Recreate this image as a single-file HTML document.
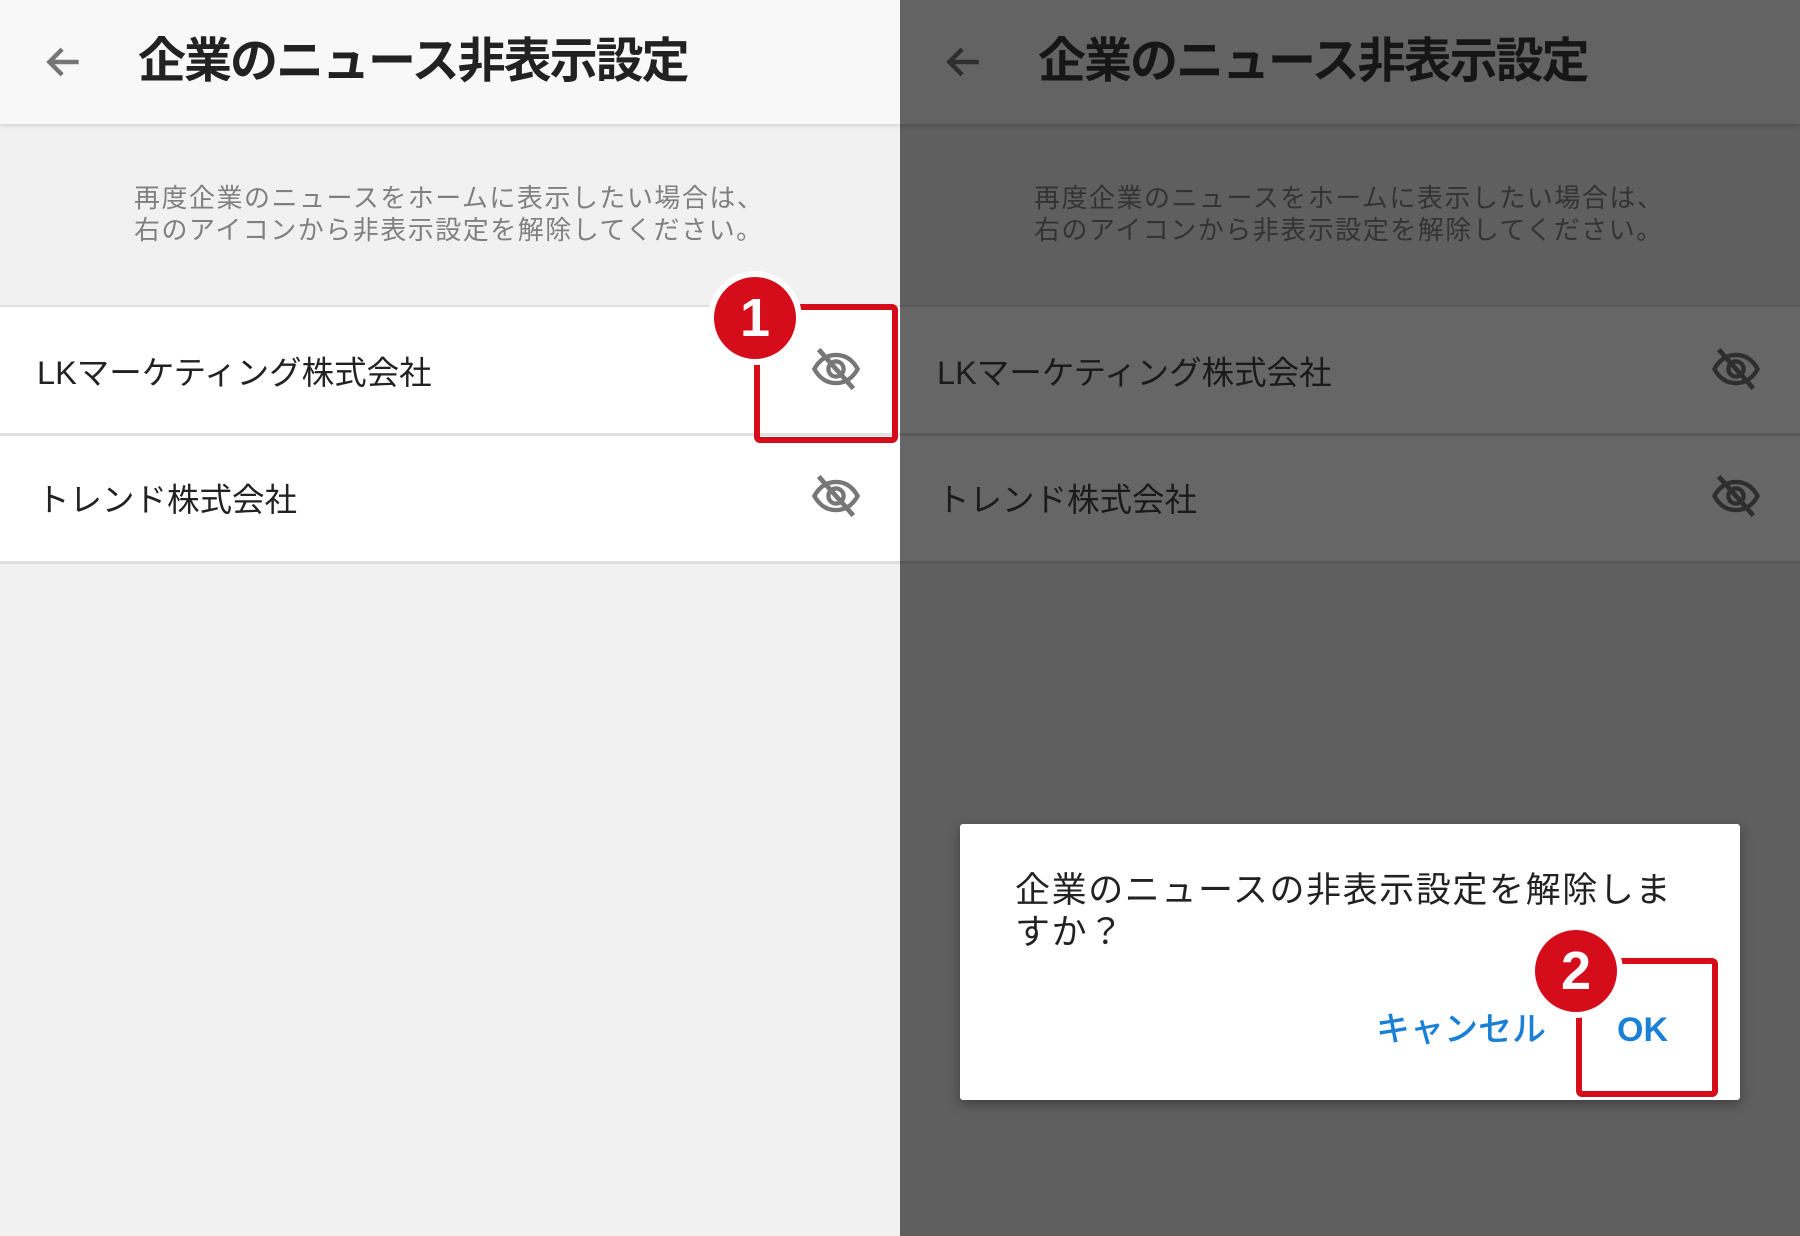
<!DOCTYPE html>
<html><head><meta charset="utf-8">
<style>
*{margin:0;padding:0;box-sizing:border-box}
body{width:1800px;height:1236px;overflow:hidden;position:relative;font-family:"Liberation Sans","Noto Sans CJK JP",sans-serif;background:#f1f1f1}
.panel{position:absolute;top:0;width:900px;height:1236px;overflow:hidden}
.hdr{position:absolute;left:0;top:0;width:900px;height:124px}
.title{position:absolute;left:138px;top:30px;font-size:48px;font-weight:bold;line-height:64px;white-space:nowrap;letter-spacing:-2px}
.arrow{position:absolute;left:42px;top:40px}
.desc{position:absolute;left:134px;top:182px;font-size:26px;line-height:32px;white-space:nowrap;letter-spacing:1.5px}
.row{position:absolute;left:0;width:900px}
.row .t{position:absolute;left:37px;top:44px;font-size:32.5px;line-height:44px;white-space:nowrap}
.eye{position:absolute;left:810px;top:36px}
.abs{position:absolute}
</style></head><body>

<!-- LEFT -->
<div class="panel" style="left:0;background:#f1f1f1">
  <div class="hdr" style="background:#f8f8f8;box-shadow:0 2px 4px rgba(0,0,0,0.12)">
    <svg class="arrow" width="44" height="44" viewBox="0 0 24 24"><path d="M20 12H5M11 5l-7 7 7 7" fill="none" stroke="#757575" stroke-width="2.4"/></svg>
    <div class="title" style="color:#222">企業のニュース非表示設定</div>
  </div>
  <div class="desc" style="color:#808080">再度企業のニュースをホームに表示したい場合は、<br>右のアイコンから非表示設定を解除してください。</div>
  <div class="row" style="top:305px;background:#fff;border-top:2px solid #e0e0e0;border-bottom:3px solid #e0e0e0;height:131px">
    <div class="t" style="color:#222">LKマーケティング株式会社</div>
    <svg class="eye" width="52" height="52" viewBox="0 0 24 24"><path d="M2 12c2.5-4.5 6-6.5 10-6.5s7.5 2 10 6.5c-2.5 4.5-6 6.5-10 6.5S4.5 16.5 2 12z" fill="none" stroke="#777" stroke-width="2"/><circle cx="12" cy="12" r="3.5" fill="none" stroke="#777" stroke-width="2"/><path d="M4 3l16 18" stroke="#777" stroke-width="2.2"/></svg>
  </div>
  <div class="row" style="top:436px;background:#fff;border-bottom:3px solid #e0e0e0;height:128px">
    <div class="t" style="color:#222;top:42px">トレンド株式会社</div>
    <svg class="eye" width="52" height="52" viewBox="0 0 24 24" style="top:34px"><path d="M2 12c2.5-4.5 6-6.5 10-6.5s7.5 2 10 6.5c-2.5 4.5-6 6.5-10 6.5S4.5 16.5 2 12z" fill="none" stroke="#777" stroke-width="2"/><circle cx="12" cy="12" r="3.5" fill="none" stroke="#777" stroke-width="2"/><path d="M4 3l16 18" stroke="#777" stroke-width="2.2"/></svg>
  </div>
  <div class="abs" style="left:754px;top:304px;width:144px;height:139px;border:6px solid #d50c1a;border-radius:6px"></div>
  <div class="abs" style="left:708px;top:271px;width:94px;height:94px;border-radius:50%;background:#fff"></div>
  <div class="abs" style="left:714px;top:277px;width:82px;height:82px;border-radius:50%;background:#d50c1a;color:#fff;font-weight:bold;font-size:54px;line-height:82px;text-align:center">1</div>
</div>

<!-- RIGHT -->
<div class="panel" style="left:900px;background:#5f5f5f">
  <div class="hdr" style="background:#636363;box-shadow:0 2px 4px rgba(0,0,0,0.15)">
    <svg class="arrow" width="44" height="44" viewBox="0 0 24 24"><path d="M20 12H5M11 5l-7 7 7 7" fill="none" stroke="#2e2e2e" stroke-width="2.4"/></svg>
    <div class="title" style="color:#161616">企業のニュース非表示設定</div>
  </div>
  <div class="desc" style="color:#333">再度企業のニュースをホームに表示したい場合は、<br>右のアイコンから非表示設定を解除してください。</div>
  <div class="row" style="top:305px;background:#666;border-top:2px solid #595959;border-bottom:3px solid #595959;height:131px">
    <div class="t" style="color:#1a1a1a">LKマーケティング株式会社</div>
    <svg class="eye" width="52" height="52" viewBox="0 0 24 24"><path d="M2 12c2.5-4.5 6-6.5 10-6.5s7.5 2 10 6.5c-2.5 4.5-6 6.5-10 6.5S4.5 16.5 2 12z" fill="none" stroke="#2e2e2e" stroke-width="2"/><circle cx="12" cy="12" r="3.5" fill="none" stroke="#2e2e2e" stroke-width="2"/><path d="M4 3l16 18" stroke="#2e2e2e" stroke-width="2.2"/></svg>
  </div>
  <div class="row" style="top:436px;background:#666;border-bottom:3px solid #595959;height:128px">
    <div class="t" style="color:#1a1a1a;top:42px">トレンド株式会社</div>
    <svg class="eye" width="52" height="52" viewBox="0 0 24 24" style="top:34px"><path d="M2 12c2.5-4.5 6-6.5 10-6.5s7.5 2 10 6.5c-2.5 4.5-6 6.5-10 6.5S4.5 16.5 2 12z" fill="none" stroke="#2e2e2e" stroke-width="2"/><circle cx="12" cy="12" r="3.5" fill="none" stroke="#2e2e2e" stroke-width="2"/><path d="M4 3l16 18" stroke="#2e2e2e" stroke-width="2.2"/></svg>
  </div>
</div>

<!-- dialog -->
<div class="abs" style="left:960px;top:824px;width:780px;height:276px;background:#fff;border-radius:3px;box-shadow:0 4px 12px rgba(0,0,0,0.35)">
  <div class="abs" style="left:55px;top:46px;font-size:35px;line-height:42px;color:#222;white-space:nowrap;letter-spacing:1.6px">企業のニュースの非表示設定を解除しま<br>すか？</div>
  <div class="abs" style="left:416px;top:184px;font-size:34px;line-height:44px;color:#1a7fd6;font-weight:500;white-space:nowrap">キャンセル</div>
  <div class="abs" style="left:657px;top:184px;font-size:34px;line-height:44px;color:#1a7fd6;font-weight:bold">OK</div>
</div>
<div class="abs" style="left:1576px;top:958px;width:142px;height:139px;border:6px solid #d50c1a;border-radius:6px"></div>
<div class="abs" style="left:1529px;top:924px;width:94px;height:94px;border-radius:50%;background:#fff"></div>
<div class="abs" style="left:1535px;top:930px;width:82px;height:82px;border-radius:50%;background:#d50c1a;color:#fff;font-weight:bold;font-size:54px;line-height:82px;text-align:center">2</div>

</body></html>
